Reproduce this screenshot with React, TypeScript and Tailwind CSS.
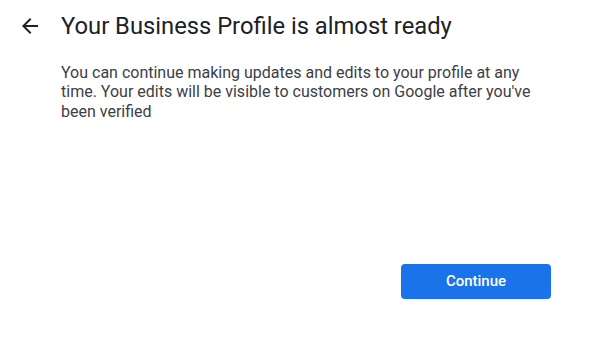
export default function App() {
  return (
    <main
      className="h-[364px] w-[613px] bg-white text-[#202124]"
      style={{ fontFamily: "Roboto, sans-serif" }}
    >
      <header className="flex items-center pt-[10px]">
        <button className="ml-[18px] flex h-[24px] w-[24px] items-center justify-center text-[#202124]">
          <svg viewBox="0 0 24 24" width="24" height="24" fill="currentColor">
            <path d="M20 11H7.83l5.59-5.59L12 4l-8 8 8 8 1.41-1.41L7.83 13H20v-2z" />
          </svg>
        </button>
        <h1 className="ml-[19px] text-[23.75px] leading-[32px] text-[#202124]">
          Your Business Profile is almost ready
        </h1>
      </header>
      <section className="pl-[61px] pt-[21px]">
        <p className="w-[485px] text-[16px] leading-[19.4px] text-[#3c4043]">
          You can continue making updates and edits to your profile at any
          time. Your edits will be visible to customers on Google after you've
          been verified
        </p>
        <div className="mt-[143px] flex w-[490px] justify-end">
          <button className="h-[35px] w-[150px] rounded-[4px] bg-[#1a73e8] text-[15px] font-medium text-white">
            Continue
          </button>
        </div>
      </section>
    </main>
  );
}
